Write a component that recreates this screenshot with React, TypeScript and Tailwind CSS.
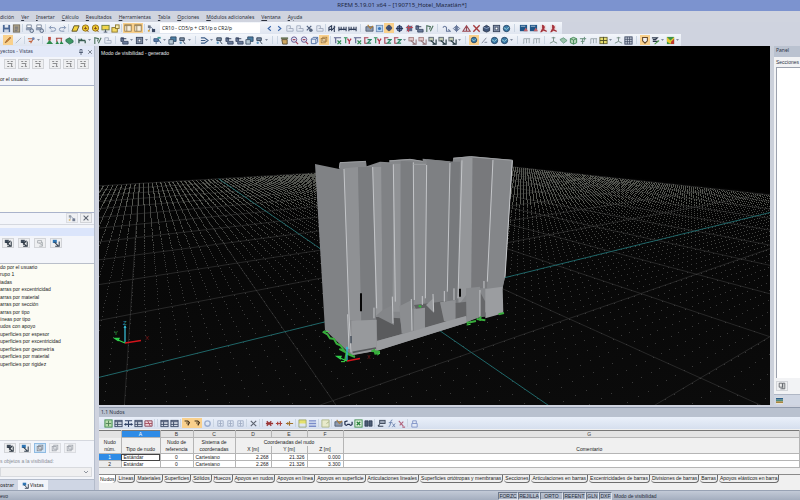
import { Fragment, type ReactNode } from "react";
import clsx from "clsx";

/* ------------------------------------------------------------------ */
/* Icons, all on a 10 x 10 grid                                        */
/* ------------------------------------------------------------------ */

const NAVY = "#3c4a66";

const glyphs: Record<string, ReactNode> = {
  save: (
    <>
      <rect x="1" y="1" width="8" height="8" fill="#4a6694" />
      <rect x="3" y="1" width="4" height="3" fill="#e6ebf4" />
      <rect x="2.5" y="6" width="5" height="3" fill="#c9d3e4" />
    </>
  ),
  doc: (
    <>
      <rect x="1.5" y="1" width="7" height="8" fill="#b3a589" stroke="#77705f" />
      <path d="M3 3.5h4M3 5.5h4M3 7.5h3" stroke="#5e6779" />
    </>
  ),
  print: (
    <>
      <path d="M2 1h5v3H2z" fill="#fff" stroke="#7b879b" />
      <path d="M1 4h7v3H1z" fill="#8e9bb1" />
      <circle cx="7.5" cy="7.5" r="2" fill="#cdd7e6" stroke="#55647d" />
    </>
  ),
  undo: <path d="M3.5 2L1.5 4l2 2M2 4h4q2.500 0 2.500 2T6 8H3" fill="none" stroke="#8294b2" strokeWidth="1.100" />,
  redo: <path d="M6.500 2l2 2-2 2M8 4H4Q1.500 4 1.500 6T4 8h3" fill="none" stroke="#8294b2" strokeWidth="1.100" />,
  plane: <path d="M3.500 2h5.500L6.500 8H1z" fill="#f3d23c" stroke="#544b20" />,
  ball: (
    <>
      <circle cx="5" cy="4.500" r="3.500" fill="#f0c72e" stroke="#8f6d15" />
      <path d="M5 3v3M3.500 5h3M6.500 7l2 2" stroke="#7c4a1d" />
    </>
  ),
  screen: (
    <>
      <rect x="1" y="1.500" width="8" height="5" fill="#f2d64b" stroke="#6f7c3b" />
      <path d="M5 6v3M3 9h4" stroke="#4a5669" />
    </>
  ),
  folder: (
    <>
      <rect x="1" y="4" width="6" height="5" fill="#f4da63" stroke="#8b762b" />
      <rect x="5" y="1" width="4" height="4" fill="#f7edb3" stroke="#8b762b" />
    </>
  ),
  pane: (
    <>
      <rect x="1" y="1" width="8" height="8" fill="#f7efe0" stroke="#8d7447" />
      <path d="M1 2h8M3.500 2v7" stroke="#8d7447" />
    </>
  ),
  nodes: (
    <>
      <path d="M2 8L4 3l4 4" fill="none" stroke="#7384a1" />
      <rect x="1" y="1.500" width="3" height="3" fill="#6f7885" />
      <rect x="5.500" y="5.500" width="3.500" height="3.500" fill={NAVY} />
      <rect x="1" y="6.500" width="2" height="2" fill="#d9a63a" />
    </>
  ),
  lt: <path d="M6.500 2.500L3.500 5l3 2.500" fill="none" stroke="#3866aa" strokeWidth="1.200" />,
  gt: <path d="M3.500 2.500l3 2.500-3 2.500" fill="none" stroke="#3866aa" strokeWidth="1.200" />,
  pale: <path d="M2 2h4v3h3v3H2zM4 5h3" fill="none" stroke="#a3adc0" />,
  star: (
    <>
      <path d="M2 2l4 4M7 2L2 7" stroke="#4f5f7c" strokeWidth="1.300" />
      <circle cx="6.500" cy="7" r="2" fill="#56647c" />
    </>
  ),
  dims: <path d="M1 8V4l3-2v5l4-4M7 2v7M1 6h3" fill="none" stroke="#2f3d58" strokeWidth="1.200" />,
  scale: <path d="M1 3v5M9 3v5M3.500 3v4M6.500 3v4M1 6h8" stroke="#2f3d58" strokeWidth="1.200" />,
  props: (
    <>
      <path d="M1 3h8v5H1z" fill="#8c9ab0" stroke="#3f4a5c" strokeWidth=".8" />
      <path d="M3 1l3 4 3-3" fill="none" stroke="#b07c34" strokeWidth="1.200" />
    </>
  ),
  target: (
    <>
      <rect x="1.500" y="1.500" width="7" height="7" fill="#b7d4ef" stroke="#7290b8" />
      <circle cx="5" cy="5" r="1.800" fill="#3b77bb" />
    </>
  ),
  mesh: (
    <>
      <circle cx="5" cy="5" r="3" fill="#5c70a0" stroke="#2d3b60" />
      <path d="M1 5h8M5 1v8" stroke="#26334f" />
    </>
  ),
  redmesh: (
    <>
      <rect x="2" y="2" width="6" height="6" fill="#5c6a8c" />
      <path d="M1 4h8M4 1v8M2 8l6-6" stroke="#c04450" />
    </>
  ),
  cross: <path d="M1.500 1.500l7 7M8.500 1.500l-7 7" stroke="#a43a3c" strokeWidth="1.500" />,
  graycross: <path d="M2 2l6 6M8 2L2 8" stroke="#5d6470" strokeWidth="1.300" />,
  curve: <path d="M1 4q2-3 4 0v4h4L7 6" fill="none" stroke="#66779a" strokeWidth="1.200" />,
  mirror: <path d="M5 1v8M1.500 5L4 2.500v5zM8.500 5L6 2.500v5z" fill="#cbd4e5" stroke="#5b6d92" />,
  peak: <path d="M1 8L5 2l4 6zM5 2v6" fill="#d6dce8" stroke="#9a4650" strokeWidth="1.200" />,
  cube: (
    <>
      <path d="M1.500 3.500L5 1.500l3.500 2v4L5 9 1.500 7.500z" fill="#3e5579" stroke="#232e45" strokeWidth=".9" />
      <path d="M1.500 3.500L5 5l3.500-1.500" fill="none" stroke="#a9bbd6" strokeWidth=".8" />
    </>
  ),
  greencube: (
    <>
      <path d="M1.500 3L5 1.500 8.500 3v4.500L5 9 1.500 7.500z" fill="#b5d6b9" stroke="#3d8550" />
      <path d="M1.500 3L5 4.500 8.500 3M5 4.500V9" fill="none" stroke="#3d8550" strokeWidth=".9" />
    </>
  ),
  panel: (
    <>
      <rect x="1" y="1" width="8" height="7" fill="#1f5688" />
      <path d="M5 8l2.500-4L10 8z" fill="#c0636a" />
      <path d="M2 2.500h5" stroke="#a9bfd7" />
    </>
  ),
  pdf: (
    <>
      <path d="M1.500 1h6l1 8h-7z" fill="#ecd9db" />
      <path d="M4 1q3 2 1.500 4T8.500 8L5 7 2 9l2-4z" fill="#b52e38" stroke="#9b2a34" />
    </>
  ),
  pencil: <path d="M1.500 8.500L3 6l4.500-4.500 1 1L4 7z" fill="#e58325" stroke="#77502a" strokeWidth=".8" />,
  line: <path d="M2 8l6-6" stroke="#a9b2c2" />,
  member: (
    <>
      <path d="M1 3h6L4 8M2 6h4" fill="none" stroke="#c3653f" strokeWidth="1.200" />
      <circle cx="7" cy="3" r="1.500" fill="#6d83b2" />
    </>
  ),
  support: (
    <>
      <path d="M3.500 1h3v4h-3z" fill="#bf4a3f" />
      <path d="M1.500 9L5 4.500 9 9z" fill="#2e8b4c" />
    </>
  ),
  supports: (
    <>
      <path d="M1 2.500h7M2 3v4M7 3v4" stroke="#a9463f" strokeWidth="1.200" />
      <path d="M.5 9l2-3.500 2 3.500zM5 9l2-3.500L9.500 9z" fill="#278a4b" />
    </>
  ),
  surface: <path d="M1 4l4-2 4 3v2L5 9 1 6z" fill="#3f9864" stroke="#23634a" strokeWidth=".8" />,
  palesurface: <path d="M1 4l4-2 4 3-4 3z" fill="#9cc4ac" stroke="#5f9479" strokeWidth=".9" />,
  beam: <path d="M1 8V3M1 5h7M8 5v3M3 3l2 2" fill="none" stroke="#375c4f" strokeWidth="1.400" />,
  flag: <path d="M2 9V2l4 1-1 3M6 8l3-6" fill="none" stroke="#4b6f5a" strokeWidth="1.200" />,
  load: (
    <>
      <path d="M1 2h3v4h5v3H3V6H1z" fill="#6a7b9b" stroke="#34425c" strokeWidth=".9" />
      <path d="M2 3h5" stroke="#34425c" />
    </>
  ),
  opening: (
    <>
      <rect x="1.500" y="1.500" width="7" height="7" fill="#8492ab" stroke="#37435b" />
      <rect x="3.500" y="3.500" width="3" height="3" fill="#fff" stroke="#37435b" strokeWidth=".7" />
    </>
  ),
  layers: (
    <>
      <path d="M3 1h6v5H3z" fill="#4b7fa3" stroke="#2b445f" strokeWidth=".9" />
      <path d="M1 4h5v5H1z" fill="#b8c9d5" stroke="#3a4e64" strokeWidth=".9" />
    </>
  ),
  arrow: <path d="M1 2h4l4 3-4 3H1M1 5h5" fill="none" stroke="#3b5b84" strokeWidth="1.300" />,
  hammer: (
    <>
      <path d="M2 2h5v3H2zM5 5l3 4" fill="#7b8ea6" stroke="#364356" />
      <circle cx="3" cy="7.500" r="1.300" fill="#5e94bd" />
    </>
  ),
  ops: (
    <>
      <path d="M1 3h5v3H1zM3.500 6v3M6 4l3 4" fill="#5c7fae" stroke="#36567f" />
      <rect x="5" y="1" width="3.500" height="2" fill="#42999a" />
    </>
  ),
  zoom: (
    <>
      <circle cx="4.500" cy="4" r="3" fill="#e3eefa" stroke="#5a4a86" />
      <path d="M6.500 6.500l2.500 2.500M3 4h3" stroke="#a64458" strokeWidth="1.300" />
    </>
  ),
  grab: (
    <>
      <rect x="1" y="1.500" width="8" height="2" fill="#6b775a" />
      <path d="M2 4h6v5H3z" fill="#cfa862" stroke="#4e4127" strokeWidth=".9" />
    </>
  ),
  cubes: (
    <>
      <rect x="1.500" y="3" width="5" height="5.500" fill="#f2e3c4" stroke="#a07a41" />
      <rect x="3.500" y="1.500" width="5" height="5" fill="none" stroke="#a07a41" />
    </>
  ),
  graycubes: (
    <>
      <rect x="1.500" y="3" width="5" height="5.500" fill="#e8eaed" stroke="#7d828b" />
      <rect x="3.500" y="1.500" width="5" height="5" fill="none" stroke="#7d828b" />
    </>
  ),
  wire: <path d="M1.500 3.500h5v5h-5zM3.500 1.500h5v5l-2 2M1.500 3.500l2-2M6.500 3.500l2-2" fill="none" stroke="#4c6ba0" />,
  axisx: (
    <>
      <path d="M1 2h8M3 2v6" fill="none" stroke="#5a5f8a" strokeWidth="1.200" />
      <path d="M5 5l4 4M9 5L5 9" stroke="#2e8a50" strokeWidth="1.300" />
    </>
  ),
  axisy: (
    <>
      <path d="M1 2h4M3 2v6" stroke="#2f8a55" strokeWidth="1.200" />
      <path d="M5 3l2 3 2-3M7 6v3" fill="none" stroke="#b8344a" strokeWidth="1.400" />
    </>
  ),
  axisz: (
    <>
      <path d="M1 2h5M2 2v6h3" fill="none" stroke="#a93f51" strokeWidth="1.200" />
      <path d="M5 4h4L5 8h4" fill="none" stroke="#2b8562" strokeWidth="1.300" />
    </>
  ),
  view: (
    <>
      <rect x="1" y="1.500" width="5" height="4" fill="#c3cbb0" stroke="#5a6672" />
      <path d="M3 5l5 4M9 4v5H5" stroke="#263a42" fill="none" strokeWidth="1.300" />
    </>
  ),
  redview: (
    <>
      <rect x="1" y="1.500" width="5" height="4" fill="#dfc6c6" stroke="#9b6f70" strokeWidth=".8" />
      <path d="M3 5l5 4M9 4v5H5" stroke="#96777a" fill="none" strokeWidth="1.200" />
    </>
  ),
  globe: (
    <>
      <circle cx="5" cy="5" r="3.500" fill="#3c7cab" stroke="#20405f" />
      <path d="M2 4l3 2 3-3" fill="none" stroke="#9ed0d4" />
    </>
  ),
  brush: <path d="M2 8l5-6M5 7h3" stroke="#7a8394" />,
  glasses: <path d="M1 6V3l3-1M9 6V3M1 6q1.500 2 3 0h2q1.500 2 3 0" fill="none" stroke="#253252" strokeWidth="1.400" />,
  steps: <path d="M1 8h1V3h3v5M5 3h4M8 3v5" fill="none" stroke="#9aa6ac" />,
  greenaxis: <path d="M5 1v5l4 2M5 6L1 8M3 2h4" fill="none" stroke="#7d948c" strokeWidth="1.100" />,
  fingers: <path d="M4 9V3M1 3h7M6 1v4M2 6h4" fill="none" stroke="#68907c" strokeWidth="1.100" />,
  windows: (
    <>
      <rect x="1" y="1.500" width="8" height="7" fill="#e5dc6e" stroke="#6a6733" />
      <path d="M5 1v8M1 5h8" stroke="#4a4c25" />
    </>
  ),
  grid: (
    <>
      <rect x="1" y="1" width="8" height="8" fill="#cbd2df" stroke="#36415b" />
      <path d="M1 3.700h8M1 6.300h8M3.700 1v8M6.300 1v8" stroke="#36415b" strokeWidth=".8" />
    </>
  ),
  shield: <path d="M2 2h6v4L5 9 2 6z" fill="#eef0f3" stroke="#66492b" strokeWidth="1.300" />,
  section: (
    <>
      <path d="M1 2h6l-2 2H2M2 6h6" stroke="#2c384c" fill="none" strokeWidth="1.300" />
      <path d="M4 9l5-4" stroke="#4f984c" strokeWidth="1.300" />
    </>
  ),
  rainbow: (
    <>
      <rect x="1" y="1" width="8" height="8" fill="#3d9147" />
      <path d="M1 1l4 4 4-4v3L5 9 1 6z" fill="#e3c930" />
      <path d="M6 6l3-3v6H5z" fill="#bf3930" />
    </>
  ),
  table: (
    <>
      <rect x="1" y="1.500" width="8" height="7" fill="#d5dbe7" stroke="#3a4864" />
      <path d="M1 3h8M4 3v5M1 6h8" stroke="#3a4864" />
    </>
  ),
  greentable: (
    <>
      <rect x="1" y="1" width="8" height="8" fill="#b9dcae" stroke="#3c8b4a" />
      <path d="M2 5h6M5 2v6" stroke="#4c7f53" />
    </>
  ),
  colwidth: <path d="M1 2h8M5 2v7M2.500 5l-1.500 1 1.500 1M7.500 5L9 6 7.500 7M1 6h8" fill="none" stroke="#304265" strokeWidth="1.200" />,
  redtable: (
    <>
      <path d="M1 2h8v6H1z" fill="#eed3d8" stroke="#8b4254" />
      <path d="M1 5h8M4 2l3 6" stroke="#a54c5f" />
    </>
  ),
  hand: <path d="M2 2.500h4l2 2-2 3.500M4 5h2" fill="none" stroke="#3d2c17" strokeWidth="1.400" />,
  ring: <circle cx="5" cy="5" r="3" fill="none" stroke="#9badce" strokeWidth="1.500" />,
  palecol: <path d="M2 2h6v6H2zM5 2v6M3 5h4" fill="none" stroke="#a3afc6" />,
  redx: <path d="M1 5h8M2 2.500l5 5M7 2.500l-5 5" stroke="#9a3535" strokeWidth="1.400" />,
  redarrow: <path d="M1 5h7M6 2.500v5M3 3v4" stroke="#ac433c" strokeWidth="1.300" />,
  goldarrow: <path d="M1 5h8M5 2.500v5M3 3.500v3" stroke="#a0732c" strokeWidth="1.300" />,
  yellowtop: (
    <>
      <path d="M1 1h8v4H1z" fill="#e5e16d" />
      <path d="M1 1h8v8H1z" fill="none" stroke="#8e9b61" strokeWidth=".8" />
    </>
  ),
  stripes: <path d="M1 2h8M1 5h8M1 8h8" stroke="#7a8cc9" strokeWidth="1.500" />,
  note: <path d="M1 1h8v8H1zM6 5l3-2" fill="#e8eacb" stroke="#adb688" />,
  excel: (
    <>
      <rect x="1" y="1" width="8" height="8" fill="#e5f2e4" stroke="#3a8a47" />
      <path d="M3 3l4 4M7 3L3 7" stroke="#27813a" strokeWidth="1.400" />
    </>
  ),
  book: <path d="M1 2h3.500v6H1zM5.500 2H9v6H5.500z" fill="#4e5e77" stroke="#26324a" strokeWidth=".8" />,
  pages: (
    <>
      <path d="M1.500 1.500h4v5h-4zM6 1.500h2.500v7H6z" fill="#eceded" stroke="#55585e" />
      <path d="M3 8.500h3" stroke="#55585e" />
    </>
  ),
  pick: (
    <>
      <rect x="3" y="1.500" width="6" height="3.500" fill="#9aa4b5" stroke="#3a4558" />
      <path d="M1 8h6M3 6L1 8" stroke="#3a4558" strokeWidth="1.200" />
    </>
  ),
  fx: <path d="M6 1Q4 1 4 4T2 9M2 4h4M6 5l3 4M9 5L6 9" fill="none" stroke="#6b82ae" />,
  fxdel: <path d="M2 2l5 6M7 3L3 7M6 9h3" stroke="#b1647d" strokeWidth="1.200" />,
  lock: <path d="M3 5V2h4v3M2 5h6v4H2z" fill="#e3e9f5" stroke="#7f92c6" />,
  eye: (
    <>
      <path d="M1 1h5v4H1z" fill="#3f4b5a" />
      <path d="M3 4l5 5M9 3v6H4M8 2L4 7" stroke="#28323e" fill="none" strokeWidth="1.300" />
    </>
  ),
  blueeye: (
    <>
      <path d="M1 1h5v4H1z" fill="#2f76b5" />
      <path d="M3 4l5 5M9 3v6H4" stroke="#33404f" fill="none" strokeWidth="1.300" />
    </>
  ),
  grayeye: <path d="M2 2h5v3H2zM4 5l4 3M8 4v5H4" fill="none" stroke="#9fa4aa" />,
  rows: <path d="M1.500 2h2.500M6 2h2.500M2 4.500h6M1.500 8H4M6 8h2.500M7 4v4" stroke="#8d8e90" strokeWidth="1.300" />,
};

const Glyph = ({ name, className }: { name: string; className?: string }) => (
  <svg viewBox="0 0 10 10" className={clsx("shrink-0", className)} aria-hidden="true">
    {glyphs[name]}
  </svg>
);

/* "|" thin divider, "||" gap between bars, "v" drop-down mark, "*" prefix = pressed */
const ToolRun = ({ items }: { items: string }) => (
  <>
    {items.split(" ").map((item, i) => {
      if (item === "|") return <span key={i} className="ml-px mr-px h-2 w-px bg-slate-300" />;
      if (item === "||") return <span key={i} className="mx-[3px] h-2 w-px bg-slate-300" />;
      if (item === "v")
        return (
          <button key={i} aria-label="Más" className="flex w-[5px] justify-center">
            <svg viewBox="0 0 4 2" className="h-0.5 w-[3px]">
              <path d="M0 0h4L2 2z" fill="#5f6b80" />
            </svg>
          </button>
        );
      const pressed = item.startsWith("*");
      const name = pressed ? item.slice(1) : item;
      return (
        <button
          key={i}
          aria-label={name}
          className={clsx(
            "flex h-[10px] w-[10px] shrink-0 items-center justify-center",
            pressed && "bg-[#f9d08c]"
          )}
        >
          <Glyph name={name} className={pressed ? "h-2 w-2" : "h-[9px] w-[9px]"} />
        </button>
      );
    })}
  </>
);

/* ------------------------------------------------------------------ */
/* Model view                                                          */
/* ------------------------------------------------------------------ */

const project = (v: number, w: number) => {
  const d = 1 + 0.1368 * v - 0.2172 * w;
  if (d < 0.15) return null;
  return [(400 + 154 * v - 31 * w) / d, (303.4 + 17.1 * v - 27.5 * w) / d];
};

const V_MIN = -4;
const V_MAX = 10;
const W_MIN = -11;
const W_MAX = 4;

// Snapped to whole units so that the dots stay sharp; three depth bands.
const gridDots = (() => {
  const bands = [new Set<string>(), new Set<string>(), new Set<string>()];
  for (let i = V_MIN * 10; i <= V_MAX * 10; i++) {
    for (let j = W_MIN * 10; j <= W_MAX * 10; j++) {
      const p = project(i / 10, j / 10);
      if (!p || p[0] < 98 || p[0] > 772 || p[1] > 408) continue;
      const band = p[1] < 205 ? 2 : p[1] < 250 ? 1 : 0;
      bands[band].add(`M${Math.round(p[0])} ${Math.round(p[1]) + 0.5}h1`);
    }
  }
  return bands.map((band) => [...band].join(""));
})();

const dotColors = ["#3a3a3a", "#444542", "#555751"];

const gridLine = (v0: number, w0: number, v1: number, w1: number) => {
  const pts: string[] = [];
  for (let s = 0; s <= 60; s++) {
    const p = project(v0 + ((v1 - v0) * s) / 60, w0 + ((w1 - w0) * s) / 60);
    if (p) pts.push(`${p[0].toFixed(1)},${p[1].toFixed(1)}`);
  }
  return pts.join(" ");
};

const majors = [
  ...Array.from({ length: V_MAX - V_MIN + 1 }, (_, i) => V_MIN + i)
    .filter((v) => v !== 0)
    .map((v) => gridLine(v, W_MIN, v, W_MAX)),
  ...Array.from({ length: W_MAX - W_MIN + 1 }, (_, i) => W_MIN + i)
    .filter((w) => w !== 0)
    .map((w) => gridLine(V_MIN, w, V_MAX, w)),
];

const walls: [string, string][] = [
  ["118,72 120,52 198,49 200,64 240,50 268,52 268,46 330,42 368,48 368,41 458,50 460,38 512,34 638,45 615,397 608,430 560,500 500,533 230,617 150,632", "#85878a"],
  ["45,57 132,75 153,632 135,612 75,555", "#808285"],
  ["132,70 174,66 184,530 148,525", "#8f9194"],
  ["174,66 218,66 228,530 184,530", "#7a7c7f"],
  ["218,66 244,66 248,515 228,525", "#939598"],
  ["244,54 280,58 278,510 248,515", "#808285"],
  ["280,56 302,56 302,500 278,500", "#909295"],
  ["302,47 340,50 342,490 302,500", "#7b7d80"],
  ["340,60 378,60 376,470 342,490", "#898b8e"],
  ["380,43 450,49 442,470 376,475", "#7e8083"],
  ["450,50 480,50 473,480 442,470", "#77797c"],
  ["484,36 518,38 514,430 476,480", "#949699"],
  ["518,38 578,42 562,430 514,430", "#78797c"],
  ["578,42 638,45 615,397 607,430 561,432", "#848689"],
  ["228,515 300,520 308,566 232,588", "#5a5b5d"],
  ["248,495 278,480 282,540 228,512", "#848689"],
  ["298,484 335,465 337,560 305,566", "#8b8d90"],
  ["342,480 440,468 440,530 375,548", "#606163"],
  ["378,480 400,460 402,504", "#96989b"],
  ["342,492 375,488 375,550 342,558", "#939598"],
  ["420,472 467,465 467,522 440,530 432,528", "#8e9093"],
  ["467,474 500,470 500,514 467,522", "#646567"],
  ["498,430 540,425 540,517 500,530", "#898b8e"],
  ["540,440 556,470 556,515 540,517", "#67686a"],
  ["556,432 608,425 610,505 556,520", "#9b9da0"],
  ["154,527 230,524 230,617 154,630", "#97999c"],
  ["230,588 337,559 440,529 498,513 500,533 230,618", "#9a9c9f"],
];

const edges = [
  "132,72 147,510 153,622",
  "218,66 230,490",
  "280,58 286,470",
  "340,52 343,465",
  "380,60 376,460",
  "450,54 442,440",
  "486,46 474,460",
  "579,45 562,410",
  "637,47 615,397",
  "277,455 279,535",
  "334,462 336,557",
  "540,435 540,517",
  "552,408 552,430",
  "433,438 433,470",
  "462,430 462,465",
  "367,453 367,480",
  "143,508 147,612",
  "222,488 222,520",
  "399,447 401,500",
];

const Triad = ({ x, y, size, label }: { x: number; y: number; size: number; label?: boolean }) => (
  <g transform={`translate(${x} ${y})`} fill="none" strokeWidth="1.3">
    <path d={`M0 0V${-size}`} stroke="#35b6cf" />
    <path d={`M-1.500 ${2 - size}L0 ${-1 - size}l1.500 3z`} fill="#35b6cf" />
    <path d={`M0 0L${size - 1} -2.500`} stroke="#d3141b" />
    <path d="M0 0l-7-3M-10-4.500l4 0-1 2z" stroke="#2fd34c" />
    {label && (
      <g stroke="none" fontFamily="Liberation Sans, sans-serif" fontSize="6">
        <text x="-2" y="-18" fill="#2d99ad">Z</text>
        <text x="-11" y="-8" fill="#2fae45">Y</text>
        <text x="20" y="-3" fill="#7d1518">X</text>
      </g>
    )}
  </g>
);

const ModelView = () => (
  <div className="relative min-w-0 flex-1 overflow-hidden bg-black">
    <svg
      viewBox="99 46 671 359"
      preserveAspectRatio="xMidYMid slice"
      className="absolute inset-0 h-full w-full"
      role="img"
      aria-label="Modelo"
    >
      <defs>
        <linearGradient id="floor" x1="0" y1="0" x2="0" y2="1">
          <stop offset="0" stopColor="#000" />
          <stop offset=".3" stopColor="#070707" />
          <stop offset="1" stopColor="#0b0b0b" />
        </linearGradient>
      </defs>
      <path d="M99 186L512 164l258 29v212H99z" fill="url(#floor)" />
      {majors.map((pts) => (
        <polyline key={pts} points={pts} fill="none" stroke="#303030" strokeWidth=".8" />
      ))}
      {gridDots.map((d, i) => (
        <path key={i} d={d} stroke={dotColors[i]} shapeRendering="crispEdges" />
      ))}
      <polyline points={gridLine(0, W_MIN, 0, W_MAX)} fill="none" stroke="#1f6668" />
      <polyline points={gridLine(V_MIN, 0, V_MAX, 0)} fill="none" stroke="#1f6668" />

      {/* Building: walls back to front, then lit edges and supports */}
      <g transform="translate(300 145) scale(.3333)">
        {walls.map(([points, fill]) => (
          <polygon key={points} points={points} fill={fill} />
        ))}
        {edges.map((points) => (
          <polyline key={points} points={points} fill="none" stroke="#c4c6c9" strokeWidth="3" />
        ))}
        <path d="M118 70l2-17 78-4M268 48l62-5 38 6M460 40l52-5 126 11M340 58h38" fill="none" stroke="#9d9fa2" strokeWidth="3" />
        <path d="M180 445h6v54h-6zM477 431h6v24h-6z" fill="#070707" />
        <path d="M151 573h4v22h-4z" fill="#394451" />
        <path d="M158 622l70-13" stroke="#55575a" strokeWidth="5" />
        <path
          d="M68 560l14 8 8 12 12 2 8 14 12 6 10 14 8 8M118 612l42 22M135 648l4-22 26 10M222 612l4 14 14-2M214 618l26 2M500 534l28-6M530 522l26 4M540 528l2-14M596 508l16-4M356 482l8 4"
          fill="none"
          stroke="#38ad3c"
          strokeWidth="6"
        />
        <path d="M135 650h-12M240 624l-8 6M500 540l12-2M86 560l-14-2" stroke="#42e04a" strokeWidth="3" />
      </g>
      <Triad x={347} y={361} size={14} />
      <text x="367" y="359" fontFamily="Liberation Sans, sans-serif" fontSize="5" fill="#8b1a1d">X</text>
      <Triad x={125} y={343} size={17} label />
    </svg>
    <p className="absolute left-0.5 top-1 font-['Liberation_Sans',sans-serif] text-[5px] leading-[6px] text-gray-200">
      Modo de visibilidad - generado
    </p>
  </div>
);

/* ------------------------------------------------------------------ */
/* Bars at the top                                                     */
/* ------------------------------------------------------------------ */

const menus = [
  ["", "dición"],
  ["V", "er"],
  ["I", "nsertar"],
  ["C", "álculo"],
  ["R", "esultados"],
  ["H", "erramientas"],
  ["T", "abla"],
  ["O", "pciones"],
  ["M", "ódulos adicionales"],
  ["Ve", "ntana"],
  ["Ay", "uda"],
];

const TopBars = () => (
  <header className="font-['Noto_Sans',sans-serif]">
    <h1 className="h-[11px] bg-[#7c93cf] pl-1 text-center text-[6px] leading-[11px] text-[#1d2740]">
      RFEM 5.19.01 x64 – [190715_Hotel_Mazatlán*]
    </h1>
    <nav className="flex h-[11px] items-center gap-[7px] bg-[#d0d4df] text-[5px] leading-[10px] text-[#2d3340]">
      {menus.map(([key, rest]) => (
        <button key={rest}>
          <span className="underline">{key}</span>
          {rest}
        </button>
      ))}
    </nav>
    <div className="flex h-3 bg-[#cfd3df]">
      <div className="flex items-center bg-gradient-to-b from-[#f3f6fb] to-[#dfe5f0] pl-px pr-1">
        <ToolRun items="save doc | print print | undo redo | plane ball ball screen folder | *pane *pane | nodes" />
        <select
          aria-label="Caso de carga"
          className="mx-1 h-[10px] w-[100px] appearance-none bg-white pl-0.5 text-[5px] leading-[10px] text-[#222]"
        >
          <option>CR10 - CO5/p + CR1/p o CR2/p</option>
        </select>
        <ToolRun items="lt gt pale pale star pale | dims scale scale || props target *mesh mesh redmesh load flag || curve mirror peak cross cube opening globe || panel panel pdf pdf" />
      </div>
    </div>
    <div className="flex h-3 bg-[#cfd3df]">
      <div className="flex items-center bg-gradient-to-b from-[#f3f6fb] to-[#dfe5f0] pl-[3px] pr-px">
        <ToolRun items="*pencil line | member v | support supports surface | beam v flag pale || load v opening v | ops v layers hammer v || arrow v hammer load load layers hammer v || | grab zoom zoom wire *cubes | axisx axisy axisx axisz axisy axisz axisz v redview redview view view view v || *globe brush globe globe v || steps steps || greenaxis palesurface greencube fingers steps windows v greenaxis grid || *shield section v rainbow v" />
      </div>
    </div>
  </header>
);

/* ------------------------------------------------------------------ */
/* Project navigator on the left                                       */
/* ------------------------------------------------------------------ */

const visibilities = [
  "do por el usuario",
  "rupo 1",
  "iadas",
  "arras por excentricidad",
  "arras por material",
  "arras por sección",
  "arras por tipo",
  "íneas por tipo",
  "udos con apoyo",
  "uperficies por espesor",
  "uperficies por excentricidad",
  "uperficies por geometría",
  "uperficies por material",
  "uperficies por rigidez",
];

const SmallButton = ({ name, pressed, plain }: { name: string; pressed?: boolean; plain?: boolean }) => (
  <button
    aria-label={name}
    className={clsx(
      "flex h-[10px] w-3 items-center justify-center border",
      pressed ? "border-[#8fbbe2] bg-[#cfe4f7]" : "border-[#d2d4d8] bg-[#eeeff1]",
      plain && "opacity-70"
    )}
  >
    <Glyph name={name} className="h-2 w-2" />
  </button>
);

const Navigator = () => (
  <aside className="flex w-[95px] shrink-0 flex-col border-r border-[#b4bccb] bg-[#f3f5fa] font-['Liberation_Sans',sans-serif] text-[5px] leading-[7px] text-[#222]">
    <div className="flex h-[11px] items-center bg-[#e3e9f8] pr-px font-['Noto_Sans',sans-serif] text-[#3b455c]">
      <h2 className="flex-1">yectos - Vistas</h2>
      <button aria-label="Fijar" className="mr-1">
        <svg viewBox="0 0 4 6" className="h-[6px] w-1">
          <path d="M1 0.500h2v3H1zM0 3.500h4M2 3.500V6" fill="none" stroke="#4c5870" strokeWidth=".8" />
        </svg>
      </button>
      <button aria-label="Cerrar">
        <Glyph name="graycross" className="h-[6px] w-[6px]" />
      </button>
    </div>
    <div className="flex gap-0.5 pl-1 pt-0.5">
      <SmallButton name="rows" />
      <SmallButton name="rows" />
      <SmallButton name="rows" />
      <span className="w-px" />
      <SmallButton name="rows" />
      <SmallButton name="rows" />
      <SmallButton name="rows" />
    </div>
    <p className="mb-0.5 mt-[7px]">or el usuario:</p>
    <div className="flex-[5] border-y border-[#aab3cb] bg-[#fcfcf4]" />
    <div className="flex h-3 items-center justify-end gap-0.5 border-b border-[#d5d8df] pr-0.5">
      <SmallButton name="nodes" plain />
      <SmallButton name="graycross" />
    </div>
    <div className="mt-[3px] h-2 bg-[#dbe5fb]" />
    <div className="flex h-7 gap-1 border-b border-[#b9bfca] pl-0.5 pt-0.5">
      <SmallButton name="eye" />
      <SmallButton name="eye" />
      <SmallButton name="grayeye" />
      <SmallButton name="blueeye" />
    </div>
    <div className="flex-[7] bg-[#fcfcf4]">
      <ul className="flex h-[104px] flex-col justify-between">
        {visibilities.map((name) => (
          <li key={name} className="h-[7px] whitespace-nowrap">
            {name}
          </li>
        ))}
      </ul>
    </div>
    <div className="flex h-[14px] items-center gap-[3px] border-t border-[#d5d8df] pl-1">
      <SmallButton name="eye" />
      <SmallButton name="blueeye" />
      <SmallButton name="graycubes" pressed />
      <SmallButton name="graycubes" plain />
      <SmallButton name="graycubes" plain />
    </div>
    <label htmlFor="objects" className="mt-1 whitespace-nowrap text-[#8a8f98]">
      s objetos a la visibilidad:
    </label>
    <div className="relative mb-0.5 mt-0.5 mr-0.5">
      <select id="objects" className="block h-[10px] w-full appearance-none border border-[#d8dade] bg-[#f0f0f1]" />
      <svg viewBox="0 0 4 3" className="absolute right-1 top-1 h-[3px] w-1">
        <path d="M0 0l2 2 2-2" fill="none" stroke="#8f959f" />
      </svg>
    </div>
    <div className="flex h-[11px] items-center gap-1 border-t border-[#b4bccb] bg-[#cfd6e4] font-['Noto_Sans',sans-serif]">
      <button>ostrar</button>
      <button className="flex h-full items-center gap-px bg-[#f1f4fa] px-1">
        <Glyph name="blueeye" className="h-[7px] w-[7px]" />
        Vistas
      </button>
    </div>
  </aside>
);

/* ------------------------------------------------------------------ */
/* Table of nodes                                                      */
/* ------------------------------------------------------------------ */

const nodes = [
  { id: 1, kind: "Estándar", ref: 0, system: "Cartesiano", x: "2.268", y: "21.326", z: "0.000" },
  { id: 2, kind: "Estándar", ref: 0, system: "Cartesiano", x: "2.268", y: "21.326", z: "3.300" },
];

const sheets = [
  "Nudos",
  "Líneas",
  "Materiales",
  "Superficies",
  "Sólidos",
  "Huecos",
  "Apoyos en nudos",
  "Apoyos en línea",
  "Apoyos en superficie",
  "Articulaciones lineales",
  "Superficies ortótropas y membranas",
  "Secciones",
  "Articulaciones en barras",
  "Excentricidades de barras",
  "Divisiones de barras",
  "Barras",
  "Apoyos elásticos en barra",
];

const NodeTable = () => (
  <section className="bg-[#f0f0f0] font-['Liberation_Sans',sans-serif] text-[5px] text-[#1a1a1a]">
    <h2 className="h-[10px] border-t border-[#8f99ab] bg-[#b9c1cf] pl-0.5 font-['Noto_Sans',sans-serif] leading-[9px] text-[#2c3444]">
      1.1 Nudos
    </h2>
    <div className="flex h-3 items-center bg-gradient-to-b from-[#eaf0fa] to-[#d6dfee] pl-1">
      <ToolRun items="greentable table colwidth table redtable | | table table | *hand *hand ring | palecol palecol palecol | graycross | | redx redarrow goldarrow | yellowtop stripes | note | props glasses excel book | pick fx fxdel | lock" />
    </div>
    <table className="mt-px w-full table-fixed border-collapse border-t border-[#777] text-center leading-[6px] [&_td]:overflow-hidden [&_td]:whitespace-nowrap [&_td]:border-r [&_td]:border-[#b5b5b5] [&_th]:whitespace-nowrap [&_th]:border-r [&_th]:border-[#b5b5b5] [&_th]:p-0 [&_th]:font-normal">
      <colgroup>
        <col className="w-[22px]" />
        <col className="w-[39px]" />
        <col className="w-[33px]" />
        <col className="w-[42px]" />
        <col className="w-[36px]" />
        <col className="w-[36px]" />
        <col className="w-[36px]" />
        <col />
      </colgroup>
      <thead>
        <tr className="h-[6px] bg-[#e3e3e3]">
          <th />
          {["A", "B", "C", "D", "E", "F", "G"].map((letter) => (
            <th
              key={letter}
              className={clsx("border-b", letter === "A" ? "bg-[#2e8be6] text-white" : "text-[#333]")}
            >
              <span className={clsx(letter === "G" && "pl-9")}>{letter}</span>
            </th>
          ))}
        </tr>
        <tr className="h-2">
          <th>Nudo</th>
          <th />
          <th>Nudo de</th>
          <th>Sistema de</th>
          <th colSpan={3}>Coordenadas del nudo</th>
          <th />
        </tr>
        <tr className="h-2 border-b border-[#b5b5b5]">
          <th>núm.</th>
          <th>Tipo de nudo</th>
          <th>referencia</th>
          <th>coordenadas</th>
          <th>X [m]</th>
          <th>Y [m]</th>
          <th>Z [m]</th>
          <th>
            <span className="pl-9">Comentario</span>
          </th>
        </tr>
      </thead>
      <tbody>
        {nodes.map((node, i) => (
          <tr key={node.id} className="h-[7px] border-b border-[#b5b5b5] bg-white">
            <th scope="row" className={i === 0 ? "bg-[#2e8be6] text-white" : "bg-[#ececec]"}>
              {node.id}
            </th>
            <td className={clsx("pl-0.5 text-left", i === 0 && "outline outline-[#444] -outline-offset-1")}>{node.kind}</td>
            <td>{node.ref}</td>
            <td className="pl-0.5 text-left">{node.system}</td>
            <td className="pr-0.5 text-right">{node.x}</td>
            <td className="pr-0.5 text-right">{node.y}</td>
            <td className="pr-0.5 text-right">{node.z}</td>
            <td />
          </tr>
        ))}
      </tbody>
    </table>
    <div className="mt-[6px] flex gap-px border-t border-[#8a8a8a] pb-[7px]">
      {sheets.map((name, i) => (
        <button
          key={name}
          className={clsx(
            "h-2 whitespace-nowrap rounded-b-sm border-r border-[#6d6d6d] px-px leading-[7px]",
            i === 0 ? "bg-white" : "border-b"
          )}
        >
          {name}
        </button>
      ))}
    </div>
  </section>
);

/* ------------------------------------------------------------------ */

const ControlPanel = () => (
  <aside className="flex w-[26px] shrink-0 flex-col overflow-hidden bg-[#d0d6e3] font-['Noto_Sans',sans-serif] text-[5px] text-[#2c3444]">
    <h2 className="h-[11px] bg-[#bac2d0] pl-0.5 leading-[9px]">Panel</h2>
    <div className="flex flex-1 flex-col bg-[#f2f3f5] pl-0.5">
      <h3 className="font-['Liberation_Sans',sans-serif] leading-[10px]">Secciones</h3>
      <div className="flex-1 border-l border-t border-[#9ba1ad] bg-white" />
      <div className="flex h-4 items-center">
        <SmallButton name="pages" />
      </div>
    </div>
    <div className="flex h-[11px] items-center border-t border-[#b0b7c5] pl-0.5">
      <svg viewBox="0 0 8 8" className="h-[7px] w-[7px]" aria-hidden="true">
        <rect width="8" height="8" fill="#f2f0e8" />
        <path d="M0 1h8v2H0z" fill="#2d5d8b" />
        <path d="M0 3h8v2H0z" fill="#4f8c7c" />
        <path d="M0 5h8v2H0z" fill="#a8853e" />
      </svg>
    </div>
  </aside>
);

const snapModes = [
  { name: "FORZC", width: "w-5" },
  { name: "REJILLA", width: "w-[22px]" },
  { name: "ORTO", width: "w-[23px]" },
  { name: "REFENT", width: "w-[23px]" },
  { name: "GLN", width: "w-[13px]" },
  { name: "DXF", width: "w-[13px]" },
];

const StatusBar = () => (
  <footer className="flex h-[10px] items-center border-t border-[#98a2b4] bg-gradient-to-b from-[#c3cad7] to-[#a4aebf] font-['Liberation_Sans',sans-serif] text-[5px] leading-[6px] text-[#232a38]">
    <span className="w-[498px] shrink">evo</span>
    {snapModes.map(({ name, width }, i) => (
      <Fragment key={name}>
        <button
          className={clsx(
            "h-2 shrink-0 whitespace-nowrap border border-b-[#dfe3ea] border-l-[#6f7a8d] border-r-[#dfe3ea] border-t-[#6f7a8d] text-center",
            width
          )}
        >
          {name}
        </button>
        {i === snapModes.length - 1 && <span className="pl-0.5">Modo de visibilidad</span>}
      </Fragment>
    ))}
  </footer>
);

const App = () => (
  <div className="flex h-screen flex-col overflow-hidden bg-[#cfd3df]">
    <TopBars />
    <main className="flex min-h-0 flex-1">
      <Navigator />
      <div className="ml-1 flex min-w-0 flex-1 flex-col">
        <div className="flex min-h-0 flex-1">
          <ModelView />
          <div className="w-1 bg-[#cbd0da]" />
          <ControlPanel />
        </div>
        <div className="h-0.5" />
        <NodeTable />
      </div>
    </main>
    <StatusBar />
  </div>
);

export default App;
